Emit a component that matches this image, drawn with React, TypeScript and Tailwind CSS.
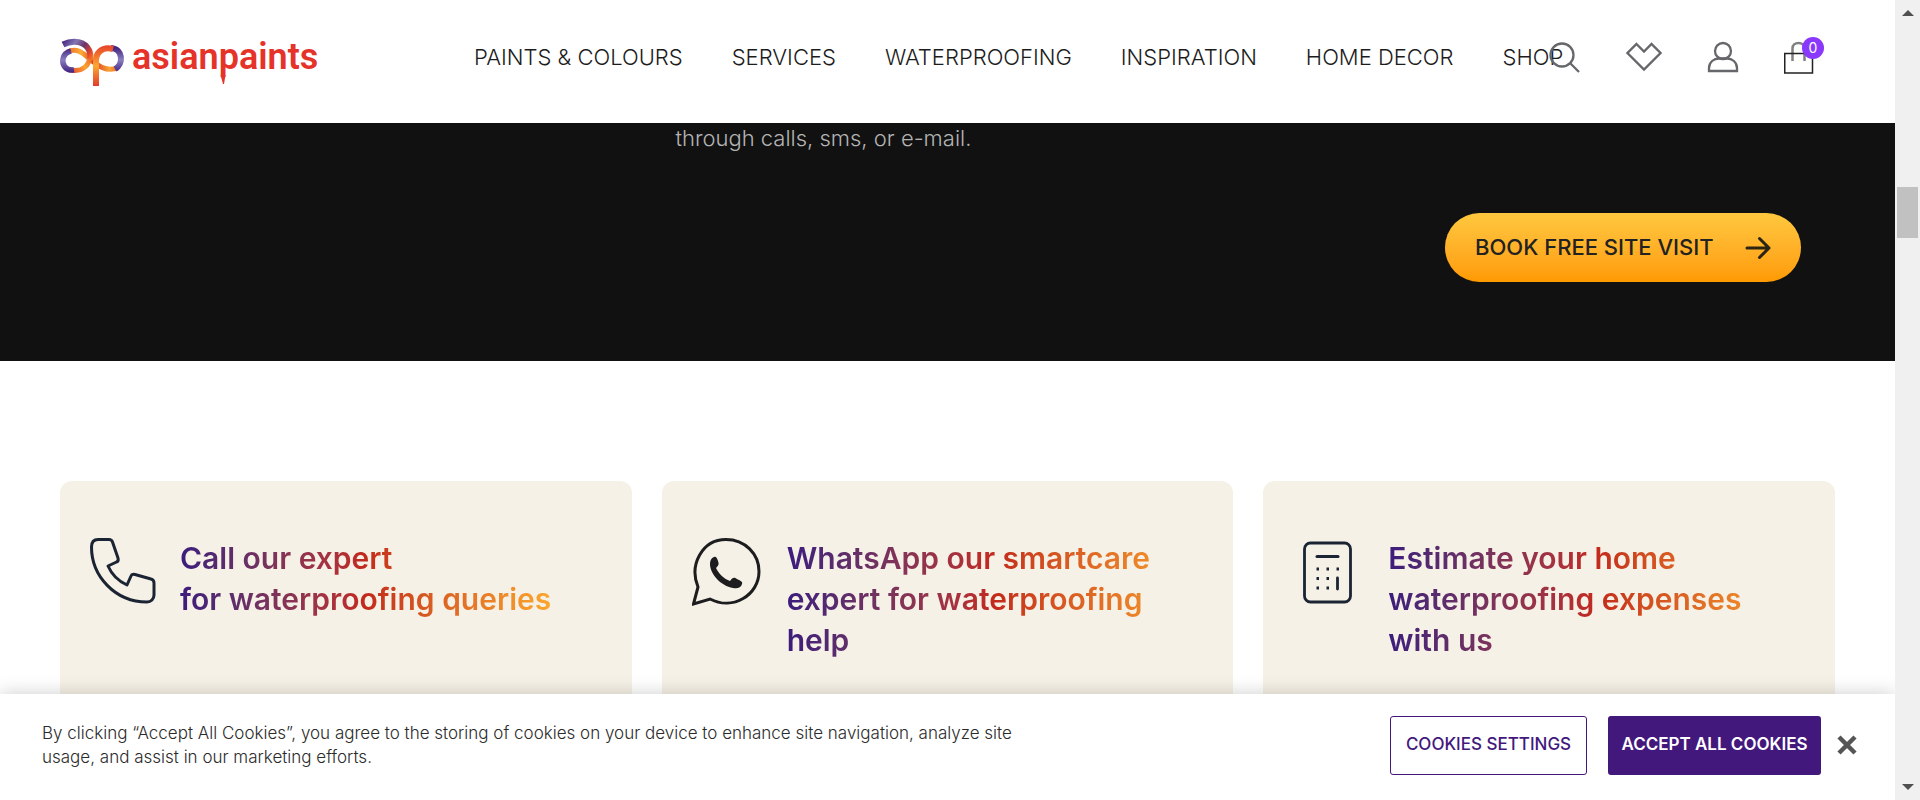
import React from "react";

const NAV = ["PAINTS & COLOURS", "SERVICES", "WATERPROOFING", "INSPIRATION", "HOME DECOR", "SHOP"];

function Logo() {
  return (
    <a href="#home" aria-label="asianpaints" className="block">
      <svg width="264" height="56" viewBox="0 -6 264 56" fill="none" aria-hidden="true" className="overflow-visible">
        <defs>
          <linearGradient id="a-top" x1="2" y1="4" x2="30" y2="26" gradientUnits="userSpaceOnUse">
            <stop offset="0" stopColor="#45247f" />
            <stop offset="0.3" stopColor="#8377b4" />
            <stop offset="0.55" stopColor="#6b3568" />
            <stop offset="0.8" stopColor="#e5432b" />
            <stop offset="1" stopColor="#f58a2c" />
          </linearGradient>
          <linearGradient id="a-base" x1="10" y1="34" x2="31" y2="20" gradientUnits="userSpaceOnUse">
            <stop offset="0" stopColor="#e8452b" />
            <stop offset="0.6" stopColor="#fba432" />
            <stop offset="1" stopColor="#ef6a2a" />
          </linearGradient>
          <linearGradient id="cross" x1="8" y1="0" x2="60" y2="0" gradientUnits="userSpaceOnUse">
            <stop offset="0" stopColor="#ef6a2a" />
            <stop offset="0.25" stopColor="#fcae34" />
            <stop offset="0.5" stopColor="#d93a26" />
            <stop offset="0.8" stopColor="#fba432" />
            <stop offset="1" stopColor="#ea5a2a" />
          </linearGradient>
          <linearGradient id="side" x1="0" y1="10" x2="0" y2="34" gradientUnits="userSpaceOnUse">
            <stop offset="0" stopColor="#45247f" />
            <stop offset="0.5" stopColor="#8a7fc0" />
            <stop offset="1" stopColor="#45247f" />
          </linearGradient>
          <linearGradient id="stem" x1="0" y1="8" x2="0" y2="48" gradientUnits="userSpaceOnUse">
            <stop offset="0" stopColor="#e8452b" />
            <stop offset="0.5" stopColor="#fba832" />
            <stop offset="1" stopColor="#e23a2c" />
          </linearGradient>
        </defs>
        <path d="M8 14C16 9 23 15 30 21C38 28 46 34 58 30" stroke="url(#cross)" strokeWidth="5" />
        <path d="M30 17C30 28 22 34 11 32" stroke="url(#a-base)" strokeWidth="5" />
        <path d="M3 6.500C14 1 25 4 29 12C30 14 31 17 30 21" stroke="url(#a-top)" strokeWidth="6" />
        <path d="M14 32C5 33 2 26 3 21C4 16 7 14 11 13" stroke="url(#side)" strokeWidth="5.500" />
        <path d="M51 10C63 11 64 26 55 31" stroke="url(#side)" strokeWidth="6" />
        <path d="M36 48V25C35 15 42 8 53 11" stroke="url(#stem)" strokeWidth="6" />
        <text x="72" y="31" fill="#e5332a" className="font-['Roboto',sans-serif] text-[36px] font-semibold">
          asianpaints
        </text>
        <path d="M160.500 37H165.500L164 46H163Z" fill="#e5332a" />
      </svg>
    </a>
  );
}

function Header() {
  return (
    <header className="relative z-10 flex h-[123px] shrink-0 items-start bg-white pr-[75px] pl-[60px]">
      <div className="w-[414px] shrink-0 pt-8">
        <Logo />
      </div>
      <nav className="min-w-0 flex-1 pt-[42px]">
        <ul className="flex gap-[49px] text-[22px] leading-[30px] font-light whitespace-nowrap text-[#1c1c1c]">
          {NAV.map((n) => (
            <li key={n}>
              <a href="#nav">{n}</a>
            </li>
          ))}
        </ul>
      </nav>
      <div className="flex shrink-0 gap-[43px] pt-10 text-[#66676b]">
        <button aria-label="Search" className="h-9 w-9">
          <svg width="36" height="36" viewBox="0 0 36 36" fill="none" stroke="currentColor" strokeWidth="2.300">
            <circle cx="15" cy="15" r="11.500" />
            <path d="M23 23L32 32" />
          </svg>
        </button>
        <button aria-label="Wishlist" className="h-9 w-9">
          <svg width="36" height="36" viewBox="0 0 36 36" fill="none" stroke="currentColor" strokeWidth="2.300">
            <path d="M10.500 4L18 11.500L25.500 4L34.500 13L18 29.500L1.500 13Z" />
          </svg>
        </button>
        <button aria-label="Account" className="h-9 w-9">
          <svg width="36" height="36" viewBox="0 0 36 36" fill="none" stroke="currentColor" strokeWidth="2.300">
            <circle cx="18" cy="11" r="8" />
            <path d="M4 31V28C4 22 9 18.500 14 18.500H22C27 18.500 32 22 32 28V31Z" />
          </svg>
        </button>
        <button aria-label="Cart" className="relative h-9 w-9">
          <svg width="36" height="36" viewBox="0 0 36 36" fill="none" strokeWidth="2">
            <path d="M8.500 21V8.500C8.500 1 20.500 1 20.500 8.500V21" stroke="#808080" strokeWidth="2.500" />
            <path d="M0.750 13.500H28.500V33H0.750Z" stroke="#222" strokeWidth="1.500" />
          </svg>
          <span className="absolute -top-[3px] left-[18px] h-[22px] w-[22px] rounded-full bg-[#8a38fb] text-center text-sm leading-[22px] text-white">
            0
          </span>
        </button>
      </div>
    </header>
  );
}

function PhoneIcon() {
  return (
    <svg width="66" height="66" viewBox="0 0 66 66" fill="none" stroke="#1b2433" strokeWidth="3" strokeLinejoin="round" className="shrink-0">
      <path d="M8 1.500H19C21 1.500 22 2.500 22.500 4L28 20C28.500 22 28 23.500 26.500 24L18 28C22 37 28 43 37 47L41 38C41.500 36.500 43 36 45 36.500L61 41C63 41.500 64 43 64 45V57C64 61 61 64 57 64C25 64 1.500 38 1.500 9C1.500 4 4 1.500 8 1.500Z" />
    </svg>
  );
}

function WhatsAppIcon() {
  return (
    <svg width="71" height="70" viewBox="1 1 71 70" fill="none" className="shrink-0">
      <path d="M2.500 67L7 50C-2 28 11 2.500 35 2.500C54 2.500 68 17 68 34.500C68 58 42 74 19 62Z" stroke="#1d1d1f" strokeWidth="3" />
      <path d="M23 20C25 19 26 21 27 24C28 27 28 28 25 31C28 37 33 42 39 44C42 40 43 40 46 42C50 44 52 45 51 47C50 51 46 52 42 51C30 49 19 37 19 27C19 24 20 21 23 20Z" fill="#1d1d1f" />
    </svg>
  );
}

function CalculatorIcon() {
  return (
    <svg width="71" height="66" viewBox="0 0 71 66" fill="none" stroke="#1b2433" strokeWidth="2.800" className="shrink-0">
      <rect x="11.500" y="5" width="46" height="59" rx="6" />
      <path d="M24 18.500H45" strokeWidth="3" strokeLinecap="round" />
      <path d="M23.500 31H26M33.500 31H36M43.500 31H46M23.500 40.500H26M33.500 40.500H36M23.500 50H26M33.500 50H36" />
      <path d="M44.500 40V51" strokeLinecap="round" />
    </svg>
  );
}

const CARDS = [
  { icon: <PhoneIcon />, lines: ["Call our expert", "for waterproofing queries"], grow: "" },
  { icon: <WhatsAppIcon />, lines: ["WhatsApp our smartcare", "expert for waterproofing", "help"], grow: "flex-1" },
  { icon: <CalculatorIcon />, lines: ["Estimate your home", "waterproofing expenses", "with us"], grow: "flex-1" },
];

function CookieBar() {
  return (
    <div
      role="region"
      aria-label="Cookie notice"
      className="absolute inset-x-0 bottom-0 z-20 flex h-[106px] items-center bg-white pr-[38px] pb-1 pl-[42px] shadow-[0_0_18px_rgba(0,0,0,0.2)]"
    >
      <p className="flex-1 text-[17px] leading-6 font-light text-[#2b2b2b]">
        By clicking “Accept All Cookies”, you agree to the storing of cookies on your device to enhance site navigation, analyze site
        <br />
        usage, and assist in our marketing efforts.
      </p>
      <button className="h-[59px] w-[197px] rounded-[3px] border border-[#43187d] text-[17px] font-medium text-[#43187d]">
        COOKIES SETTINGS
      </button>
      <button className="ml-[21px] h-[59px] w-[213px] rounded-[3px] bg-[#43187d] text-[17px] font-semibold text-white">
        ACCEPT ALL COOKIES
      </button>
      <button aria-label="Close" className="ml-4">
        <svg width="20" height="20" viewBox="0 0 20 20" stroke="#555" strokeWidth="4.500">
          <path d="M2 2L18 18M18 2L2 18" />
        </svg>
      </button>
    </div>
  );
}

export default function App() {
  return (
    <div className="flex h-screen overflow-hidden bg-white font-['Inter',sans-serif]">
      <main className="relative flex min-w-0 flex-1 flex-col overflow-hidden">
        <Header />
        <section className="flex shrink-0 flex-col bg-[#111111] pr-[94px] pb-[79px]">
          <p className="pl-[37.5%] text-[22px] leading-[30px] font-light text-[#b4b4b4]">through calls, sms, or e-mail.</p>
          <button className="mt-[60px] flex h-[69px] w-[356px] items-center justify-between self-end rounded-full bg-linear-to-b from-[#ffc83e] to-[#ff9a00] pr-[30px] pl-[30px] text-[22px] font-medium text-[#222]">
            BOOK FREE SITE VISIT
            <svg width="26" height="24" viewBox="0 0 26 24" fill="none" stroke="#2a2412" strokeWidth="3" strokeLinecap="round" strokeLinejoin="round">
              <path d="M2 12H23M14.500 2.500L24 12L14.500 21.500" />
            </svg>
          </button>
        </section>
        <section className="grid flex-1 grid-cols-3 gap-[30px] px-[60px] pt-[120px]">
          {CARDS.map((c) => (
            <article key={c.lines[0]} className="flex h-[400px] items-start gap-6 rounded-xl bg-[#f6f1e6] px-[30px] pt-[57px]">
              {c.icon}
              <h2 className={`${c.grow} bg-linear-to-r from-[#3c1b7c] via-[#c3291b] to-[#fba72f] bg-clip-text text-[30px] leading-[41px] font-semibold whitespace-nowrap text-transparent`}>
                {c.lines.map((l) => (
                  <span key={l} className="block">
                    {l}
                  </span>
                ))}
              </h2>
            </article>
          ))}
        </section>
        <CookieBar />
      </main>
      <div aria-hidden="true" className="flex w-[25px] shrink-0 flex-col items-center bg-[#f0f0f0] py-[10px]">
        <svg width="12" height="6" viewBox="0 0 12 6" fill="#505050">
          <path d="M0 6L6 0L12 6Z" />
        </svg>
        <div className="mt-[171px] h-[51px] w-[21px] bg-[#c1c1c1]" />
        <svg width="12" height="6" viewBox="0 0 12 6" fill="#505050" className="mt-auto">
          <path d="M0 0L6 6L12 0Z" />
        </svg>
      </div>
    </div>
  );
}
